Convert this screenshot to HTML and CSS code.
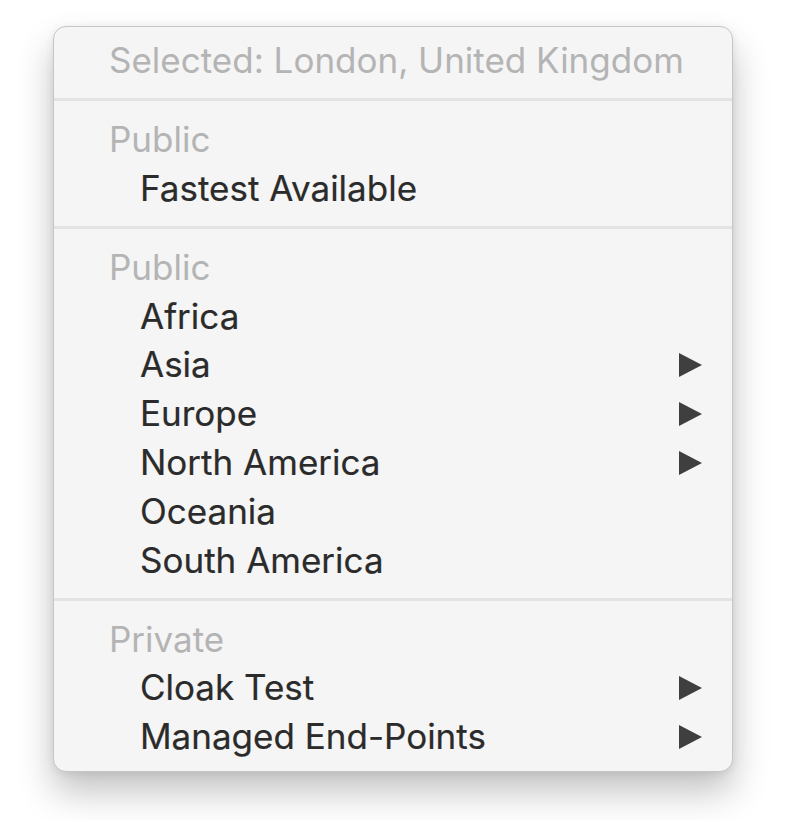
FILE: index.html
```html
<!DOCTYPE html>
<html lang="en">
<head>
<meta charset="utf-8">
<title>Menu</title>
<link rel="stylesheet" href="styles.css">
</head>
<body>
<div class="menu">
  <div class="row header">Selected: London, United Kingdom</div>
  <div class="sep"></div>
  <div class="row header">Public</div>
  <div class="row item"><span>Fastest Available</span></div>
  <div class="sep"></div>
  <div class="row header">Public</div>
  <div class="row item"><span>Africa</span></div>
  <div class="row item"><span>Asia</span><svg class="arrow" viewBox="0 0 23 24"><polygon points="0,0 23,12 0,24"/></svg></div>
  <div class="row item"><span>Europe</span><svg class="arrow" viewBox="0 0 23 24"><polygon points="0,0 23,12 0,24"/></svg></div>
  <div class="row item"><span>North America</span><svg class="arrow" viewBox="0 0 23 24"><polygon points="0,0 23,12 0,24"/></svg></div>
  <div class="row item"><span>Oceania</span></div>
  <div class="row item"><span>South America</span></div>
  <div class="sep"></div>
  <div class="row header">Private</div>
  <div class="row item"><span>Cloak Test</span><svg class="arrow" viewBox="0 0 23 24"><polygon points="0,0 23,12 0,24"/></svg></div>
  <div class="row item"><span>Managed End-Points</span><svg class="arrow" viewBox="0 0 23 24"><polygon points="0,0 23,12 0,24"/></svg></div>
</div>
</body>
</html>
```
FILE: styles.css
```css
html, body {
  margin: 0;
  padding: 0;
  background: #ffffff;
}
body {
  box-sizing: border-box;
  min-height: 820px;
  padding: 26px 0 48px 53px;
  font-family: "Inter", "Liberation Sans", sans-serif;
}
.menu {
  box-sizing: border-box;
  width: 680px;
  height: 746px;
  background: #f5f5f5;
  border: 1px solid #c6c6c6;
  border-radius: 13px;
  box-shadow: 0 20px 36px rgba(0, 0, 0, 0.24), 0 2px 8px rgba(0, 0, 0, 0.08);
  padding: 9px 0 8.5px 0;
  display: flex;
  flex-direction: column;
}
.row {
  height: 48.8px;
  line-height: 48.8px;
  font-size: 35px;
  white-space: nowrap;
  display: flex;
  align-items: center;
}
.header {
  color: #b4b4b4;
  padding-left: 55px;
}
.item {
  color: #2b2b2b;
  padding-left: 86px;
  padding-right: 30px;
  -webkit-text-stroke: 0.2px #2b2b2b;
}
.item span {
  flex: 1;
}
.arrow {
  width: 23px;
  height: 24px;
  fill: #3f3f3f;
  margin-top: 1px;
}
.sep {
  height: 3px;
  background: #e3e3e3;
  margin: 13.6px 0;
}
```
